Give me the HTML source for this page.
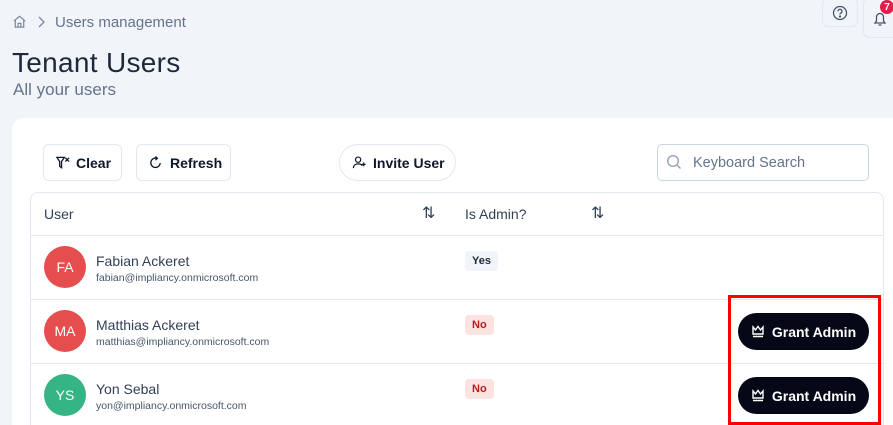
<!DOCTYPE html>
<html><head><meta charset="utf-8"><style>
*{box-sizing:border-box;margin:0;padding:0}
html,body{width:893px;height:425px;overflow:hidden}
body{background:#f1f4f9;font-family:"Liberation Sans",sans-serif;position:relative;color:#1e293b}
.abs{position:absolute}
.btn{position:absolute;background:#fff;border:1px solid #e2e8f0;border-radius:6px;height:37px;display:flex;align-items:center;font-weight:bold;font-size:14px;color:#0f172a}
.card{position:absolute;left:12px;top:118px;width:881px;height:307px;background:#fff;border-radius:12px 0 0 0}
.table{position:absolute;left:30px;top:192px;width:854px;height:233px;border:1px solid #e2e8f0;border-bottom:none;border-radius:8px 8px 0 0}
.row{position:absolute;left:30px;width:854px;border-top:1px solid #e2e8f0}
.av{position:absolute;width:42px;height:42px;border-radius:50%;color:#fff;font-size:14px;display:flex;align-items:center;justify-content:center}
.name{position:absolute;left:96px;font-size:14px;color:#334155}
.mail{position:absolute;left:96px;font-size:10.5px;color:#475569}
.badge{position:absolute;left:465px;height:20px;border-radius:4px;font-size:11px;font-weight:bold;display:flex;align-items:center;padding:0 7px}
.grant{position:absolute;left:738px;width:131px;height:37px;border-radius:19px;background:#050816;color:#fff;font-weight:bold;font-size:14px;display:flex;align-items:center;justify-content:center;gap:7px}
</style></head><body>
<svg class="abs" style="left:12px;top:14px" width="15" height="15" viewBox="0 0 16 16" fill="none" stroke="#7c8aa0" stroke-width="1.3"><path d="M2 7.5L8 2.5l6 5M3.5 6.5V14h9V6.5M6.5 14V10h3v4"/></svg>
<svg class="abs" style="left:36px;top:15px" width="10" height="14" viewBox="0 0 10 14" fill="none" stroke="#7c8aa0" stroke-width="1.3"><path d="M3 2l5 5-5 5"/></svg>
<div class="abs" style="left:55px;top:14px;font-size:15px;color:#64748b">Users management</div>
<div class="abs" style="left:822px;top:-2px;width:36px;height:29px;border:1px solid #e2e8f0;border-radius:6px;background:#f1f4f9"></div>
<svg class="abs" style="left:832px;top:5px" width="16" height="16" viewBox="0 0 16 16" fill="none" stroke="#475569" stroke-width="1.3"><circle cx="8" cy="8" r="6.5"/><path d="M6 6.3a2 2 0 1 1 2.5 1.9c-.4.2-.5.5-.5.9v.4"/><circle cx="8" cy="11.5" r=".5" fill="#475569"/></svg>
<div class="abs" style="left:863px;top:-2px;width:40px;height:40px;border:1px solid #e2e8f0;border-radius:6px;background:#f1f4f9"></div>
<svg class="abs" style="left:873px;top:11px" width="14" height="16" viewBox="0 0 14 16" fill="none" stroke="#475569" stroke-width="1.3"><path d="M2 12h10l-1.5-2V6a3.5 3.5 0 0 0-7 0v4zM5.5 14h3"/></svg>
<div class="abs" style="left:880px;top:0px;width:14px;height:14px;border-radius:50%;background:#e11d48;color:#fff;font-size:10px;font-weight:bold;display:flex;align-items:center;justify-content:center">7</div>
<div class="abs" style="left:12px;top:47px;font-size:28px;color:#1e293b;letter-spacing:.3px">Tenant Users</div>
<div class="abs" style="left:13px;top:80px;font-size:17px;color:#64748b">All your users</div>
<div class="card"></div>
<div class="btn" style="left:43px;top:144px;width:79px;padding-left:11px"><svg width="15" height="15" viewBox="0 0 16 16" fill="none" stroke="#0f172a" stroke-width="1.4"><path d="M2 2.5h8L7 7v6.5l-2-1.5V7zM11 3l4 4M15 3l-4 4"/></svg><span style="margin-left:6px">Clear</span></div>
<div class="btn" style="left:136px;top:144px;width:95px;padding-left:11px"><svg width="15" height="15" viewBox="0 0 16 16" fill="none" stroke="#0f172a" stroke-width="1.4"><path d="M13 8.5A5 5 0 1 1 9.5 3.5M8 1.5l2 2-2 2"/></svg><span style="margin-left:7px">Refresh</span></div>
<div class="btn" style="left:339px;top:144px;width:117px;border-radius:19px;padding-left:12px"><svg width="15" height="15" viewBox="0 0 16 16" fill="none" stroke="#0f172a" stroke-width="1.3"><circle cx="6.5" cy="5" r="2.8"/><path d="M1.5 14c0-3 2.2-4.5 5-4.5s4 1 4.5 2M12.5 8v4M10.5 10h4"/></svg><span style="margin-left:6px">Invite User</span></div>
<div class="abs" style="left:657px;top:144px;width:212px;height:37px;border:1px solid #cbd5e1;border-radius:5px"></div>
<svg class="abs" style="left:666px;top:154px" width="16" height="16" viewBox="0 0 16 16" fill="none" stroke="#94a3b8" stroke-width="1.4"><circle cx="7" cy="7" r="5.3"/><path d="M11 11l3.5 3.5"/></svg>
<div class="abs" style="left:693px;top:155px;font-size:14.5px;color:#64748b">Keyboard Search</div>
<div class="table"></div>
<div class="abs" style="left:44px;top:206px;font-size:14px;color:#334155">User</div>
<div class="abs" style="left:422px;top:203px;font-size:16px;color:#334155">⇅</div>
<div class="abs" style="left:465px;top:206px;font-size:14px;color:#334155">Is Admin?</div>
<div class="abs" style="left:591px;top:203px;font-size:16px;color:#334155">⇅</div>
<div class="row" style="top:235px"></div>
<div class="row" style="top:299px"></div>
<div class="row" style="top:363px"></div>
<div class="av" style="left:44px;top:246px;background:#e64d4f">FA</div>
<div class="name" style="top:253px">Fabian Ackeret</div>
<div class="mail" style="top:272px">fabian@impliancy.onmicrosoft.com</div>
<div class="badge" style="top:251px;background:#f1f5f9;color:#1e293b">Yes</div>
<div class="av" style="left:44px;top:310px;background:#e64d4f">MA</div>
<div class="name" style="top:317px">Matthias Ackeret</div>
<div class="mail" style="top:336px">matthias@impliancy.onmicrosoft.com</div>
<div class="badge" style="top:315px;background:#fde2e2;color:#b91c1c">No</div>
<div class="av" style="left:44px;top:374px;background:#35b584">YS</div>
<div class="name" style="top:381px">Yon Sebal</div>
<div class="mail" style="top:400px">yon@impliancy.onmicrosoft.com</div>
<div class="badge" style="top:379px;background:#fde2e2;color:#b91c1c">No</div>
<div class="grant" style="top:313px"><svg width="14" height="13" viewBox="0 0 14 13" fill="none" stroke="#fff" stroke-width="1.4"><path d="M2 2l2.5 3L7 1.5 9.5 5 12 2v7H2zM2 11.5h10"/></svg>Grant Admin</div>
<div class="grant" style="top:377px"><svg width="14" height="13" viewBox="0 0 14 13" fill="none" stroke="#fff" stroke-width="1.4"><path d="M2 2l2.5 3L7 1.5 9.5 5 12 2v7H2zM2 11.5h10"/></svg>Grant Admin</div>
<div class="abs" style="left:728px;top:295px;width:153px;height:130px;border:3px solid #ff0000"></div>
</body></html>
